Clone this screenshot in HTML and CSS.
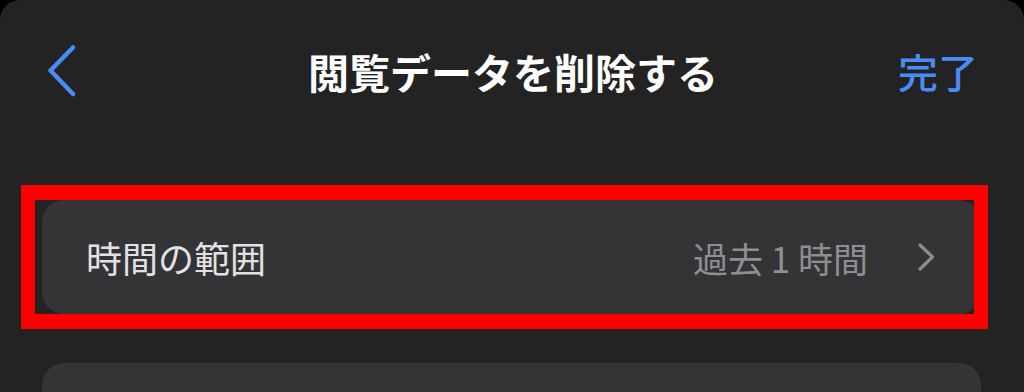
FILE: index.html
```html
<!DOCTYPE html>
<html lang="ja">

<head>
    <meta charset="utf-8">
    <title>閲覧データを削除する</title>
    <link rel="stylesheet" href="styles.css">
</head>

<body>
    <div class="sheet">
        <div class="nav">
            <button class="back" aria-label="戻る">
                <svg width="28" height="52" viewBox="0 0 28 52">
                    <polyline points="25,2.5 2.5,25.5 25,49" fill="none" stroke="#4a8cf5" stroke-width="4.5"
                        stroke-linecap="round" stroke-linejoin="round" />
                </svg>
            </button>
            <h1 class="title">閲覧データを削除する</h1>
            <button class="done">完了</button>
        </div>

        <div class="highlight">
            <div class="row">
                <span class="label">時間の範囲</span>
                <span class="value">過去 1 時間</span>
                <svg class="chevron" width="17" height="28" viewBox="0 0 17 28">
                    <polyline points="2,2 14.5,14 2,26" fill="none" stroke="#8b8b90" stroke-width="3.2"
                        stroke-linecap="round" stroke-linejoin="round" />
                </svg>
            </div>
        </div>

        <div class="group"></div>
    </div>
</body>

</html>
```

FILE: styles.css
```css
html,
body {
    margin: 0;
    height: 100%;
    background-color: #000;
}

body {
    font-family: "Noto Sans CJK JP", "Noto Sans", sans-serif;
    overflow: hidden;
}

.sheet {
    background-color: #232323;
    border-radius: 20px 20px 0 0;
    height: 100%;
    overflow: hidden;
}

.nav {
    display: grid;
    grid-template-columns: 1fr auto 1fr;
    align-items: center;
    height: 142px;
    padding: 0 46px 0 48px;
}

.nav button {
    background: none;
    border: none;
    padding: 0;
    font-family: inherit;
    cursor: pointer;
}

.back {
    justify-self: start;
    display: flex;
}

.title {
    margin: 0;
    color: #fff;
    font-size: 41px;
    font-weight: 700;
    line-height: 1;
}

.done {
    justify-self: end;
    color: #4a8cf5;
    font-size: 40px;
    font-weight: 500;
    line-height: 1;
}

.highlight {
    margin: 43px 0 0 21px;
    width: 932px;
    border: 14px solid #ff0000;
    border-top-width: 15px;
    border-bottom-width: 15px;
    padding-left: 7px;
    overflow: hidden;
}

.row {
    display: flex;
    align-items: center;
    width: 939px;
    height: 114px;
    box-sizing: border-box;
    padding: 0 46px 0 44px;
    background-color: #343436;
    border-radius: 22px;
}

.label {
    flex: 1;
    color: #e2e2e6;
    font-size: 36px;
}

.value {
    color: #8e8e93;
    font-size: 35px;
    margin-right: 50px;
}

.group {
    margin: 34px 43px 0 42px;
    height: 29px;
    background-color: #343436;
    border-radius: 22px 22px 0 0;
}
```
